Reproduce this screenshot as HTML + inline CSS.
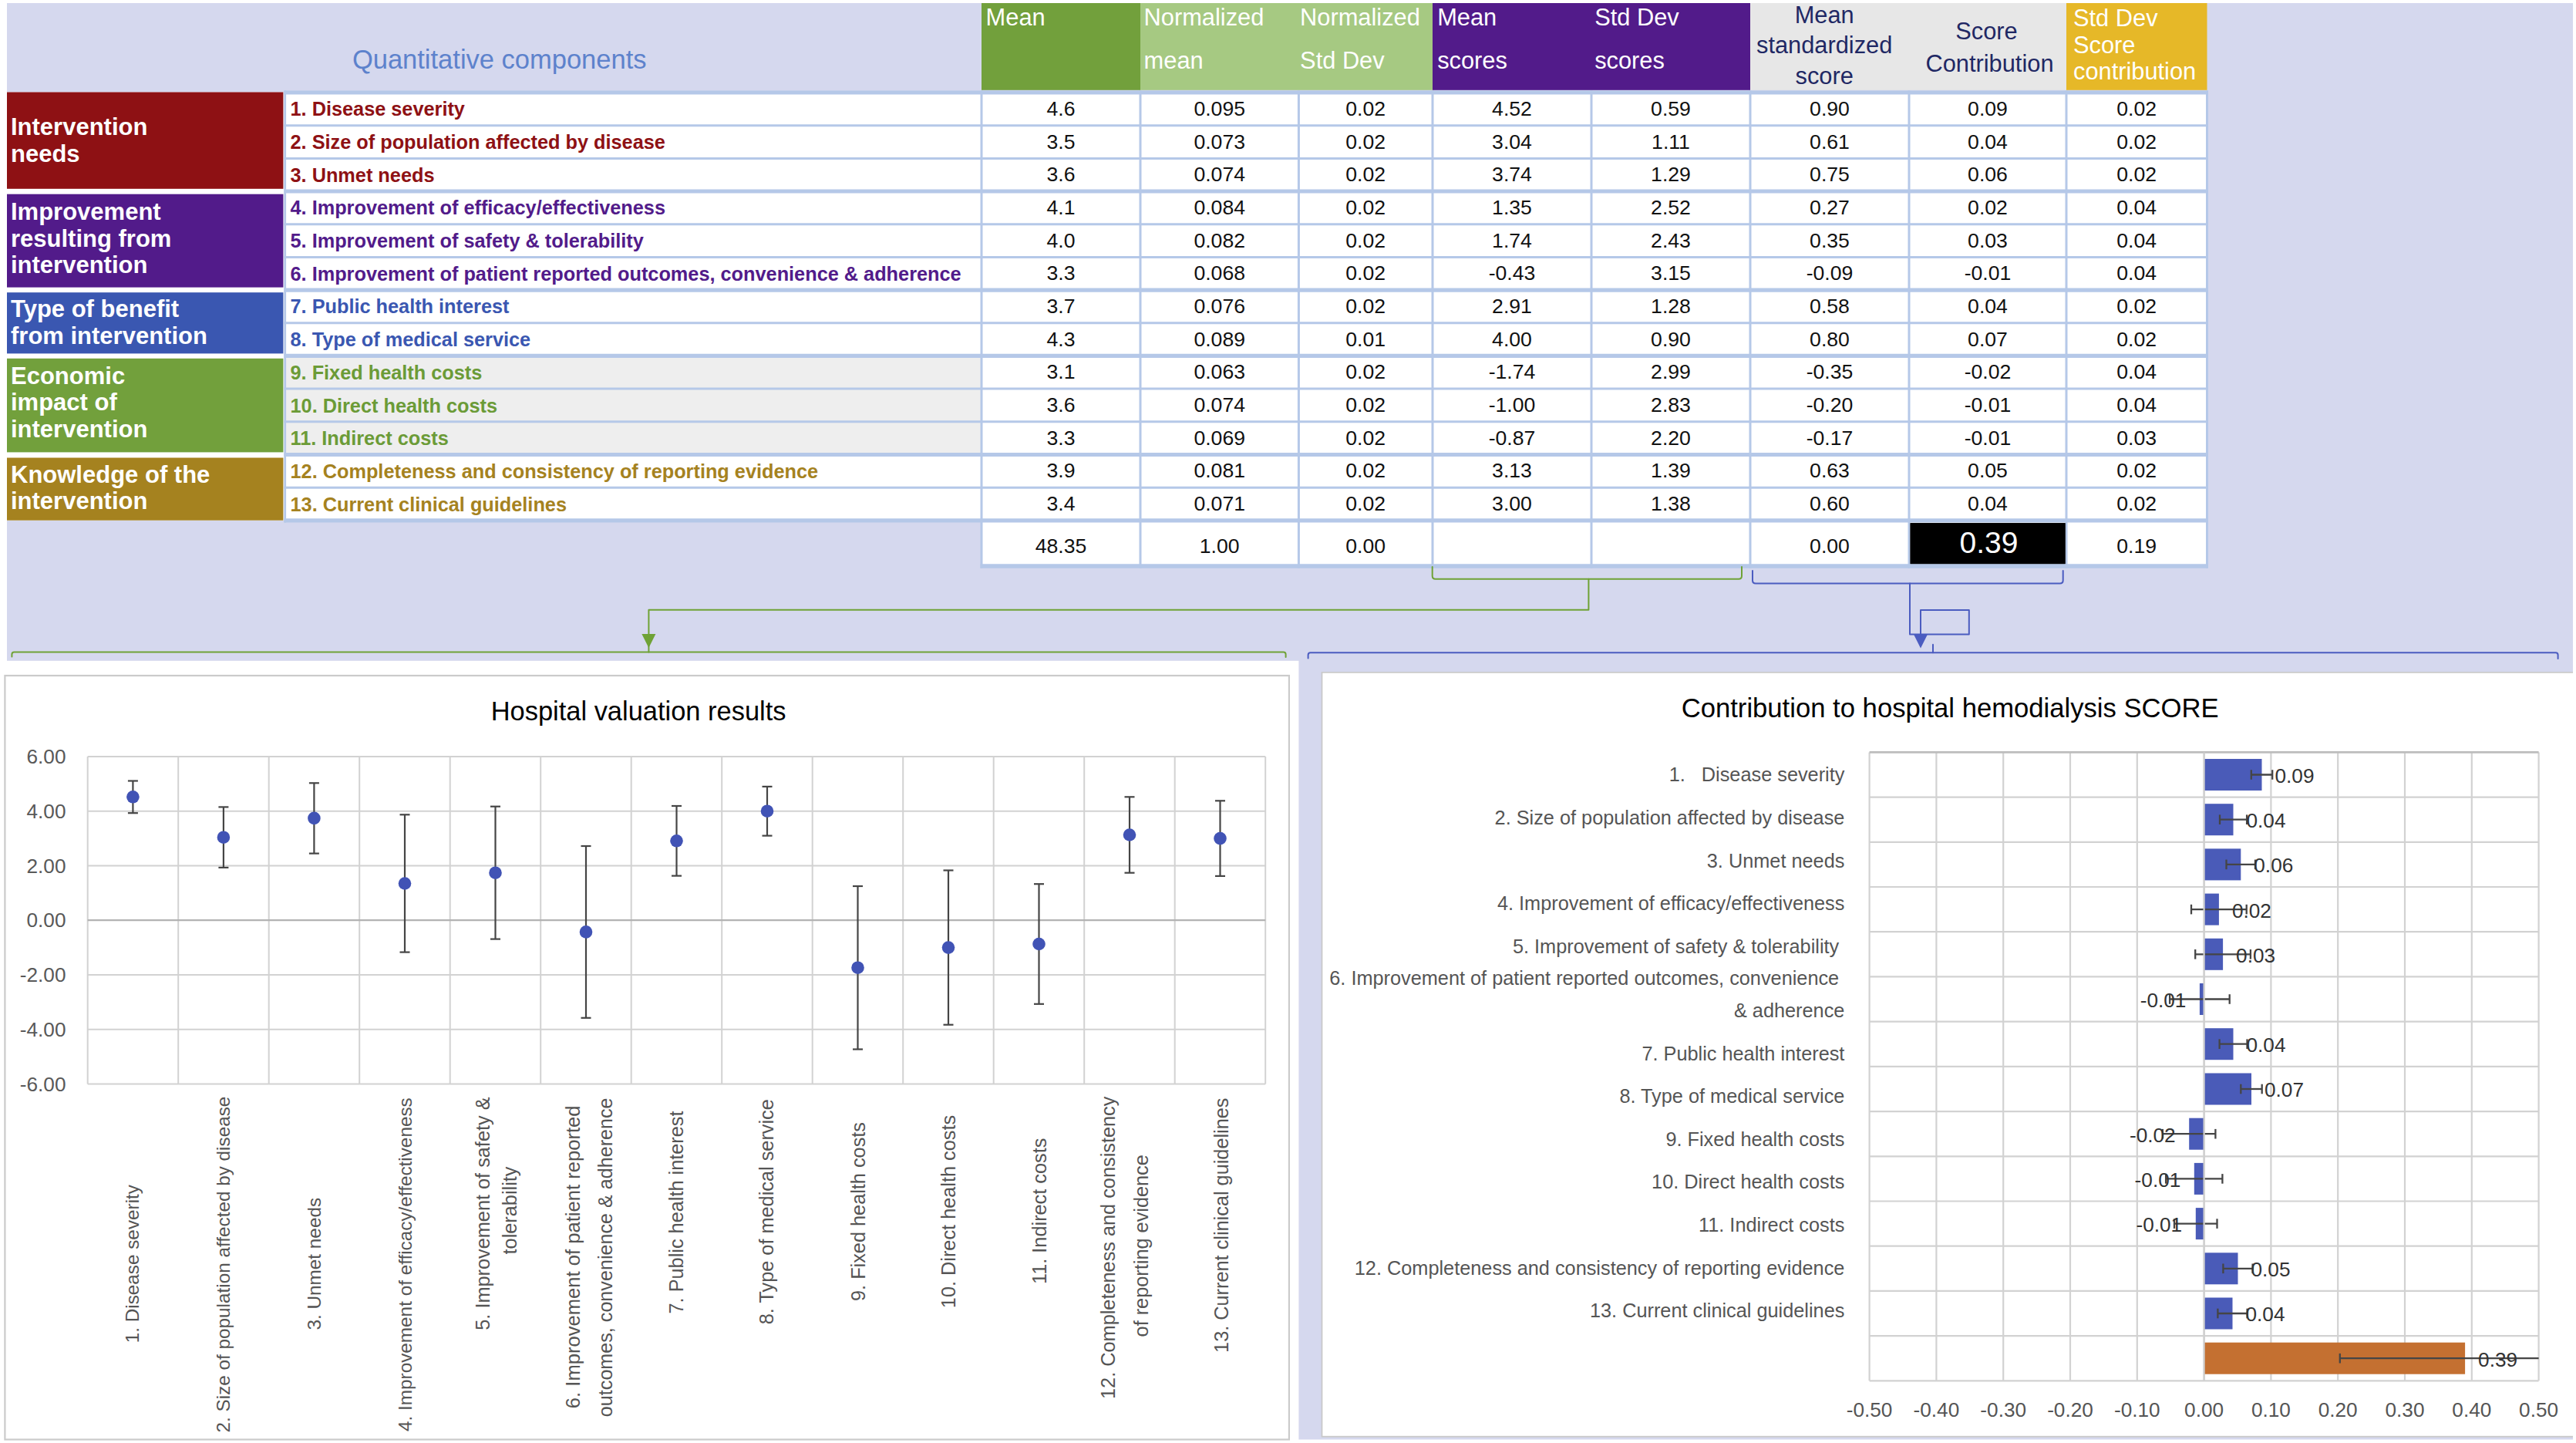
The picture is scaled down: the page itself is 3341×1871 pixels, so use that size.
<!DOCTYPE html>
<html lang="en"><head><meta charset="utf-8"><title>Hospital valuation results</title>
<style>
html,body{margin:0;padding:0;background:#fff;}
body{width:3341px;height:1871px;overflow:hidden;}
svg{display:block;font-family:"Liberation Sans",sans-serif;}
text{white-space:pre;}
</style></head><body>
<svg width="3341" height="1871" viewBox="0 0 3341 1871">
<rect x="9.0" y="4.0" width="3328.0" height="1862.5" fill="#d5d8ee" />
<rect x="0.0" y="856.8" width="1684.4" height="1014.2" fill="#fff" />
<rect x="1713.6" y="871.0" width="1627.4" height="992.6" fill="#c9c9c9" />
<rect x="1715.4" y="872.7" width="1625.6" height="989.1" fill="#fff" />
<rect x="3337.0" y="860.0" width="4.0" height="1011.0" fill="#fff" />
<rect x="3337.0" y="1861.8" width="4.0" height="9.2" fill="#fff" />
<rect x="1273.0" y="4.0" width="206.0" height="112.8" fill="#72a03c" />
<rect x="1479.0" y="4.0" width="379.0" height="112.8" fill="#a6c982" />
<rect x="1858.0" y="4.0" width="412.0" height="112.8" fill="#521b8a" />
<rect x="2270.0" y="4.0" width="410.0" height="112.8" fill="#e7e7e7" />
<rect x="2680.0" y="4.0" width="182.5" height="112.8" fill="#e6b828" />
<text x="1278.6" y="32.8" font-size="30.8" fill="#fff" text-anchor="start" font-weight="normal" >Mean</text>
<text x="1483.6" y="32.8" font-size="30.8" fill="#fff" text-anchor="start" font-weight="normal" >Normalized</text>
<text x="1483.6" y="89.4" font-size="30.8" fill="#fff" text-anchor="start" font-weight="normal" >mean</text>
<text x="1686.1" y="32.8" font-size="30.8" fill="#fff" text-anchor="start" font-weight="normal" >Normalized</text>
<text x="1686.1" y="89.4" font-size="30.8" fill="#fff" text-anchor="start" font-weight="normal" >Std Dev</text>
<text x="1864.2" y="32.8" font-size="30.8" fill="#fff" text-anchor="start" font-weight="normal" >Mean</text>
<text x="1864.2" y="89.4" font-size="30.8" fill="#fff" text-anchor="start" font-weight="normal" >scores</text>
<text x="2068.2" y="32.8" font-size="30.8" fill="#fff" text-anchor="start" font-weight="normal" >Std Dev</text>
<text x="2068.2" y="89.4" font-size="30.8" fill="#fff" text-anchor="start" font-weight="normal" >scores</text>
<text x="2366.2" y="29.8" font-size="30.8" fill="#1f2864" text-anchor="middle" font-weight="normal" >Mean</text>
<text x="2366.2" y="68.8" font-size="30.8" fill="#1f2864" text-anchor="middle" font-weight="normal" >standardized</text>
<text x="2366.2" y="109.3" font-size="30.8" fill="#1f2864" text-anchor="middle" font-weight="normal" >score</text>
<text x="2576.5" y="51.4" font-size="30.8" fill="#1f2864" text-anchor="middle" font-weight="normal" >Score</text>
<text x="2580.5" y="93.2" font-size="30.8" fill="#1f2864" text-anchor="middle" font-weight="normal" >Contribution</text>
<text x="2689.0" y="34.3" font-size="30.8" fill="#fff" text-anchor="start" font-weight="normal" >Std Dev</text>
<text x="2689.0" y="68.8" font-size="30.8" fill="#fff" text-anchor="start" font-weight="normal" >Score</text>
<text x="2689.0" y="103.1" font-size="30.8" fill="#fff" text-anchor="start" font-weight="normal" >contribution</text>
<text x="647.7" y="88.9" font-size="34.5" fill="#5d82cc" text-anchor="middle" font-weight="normal" >Quantitative components</text>
<rect x="9.0" y="119.5" width="360.7" height="555.3" fill="#fff" />
<rect x="369.7" y="118.0" width="903.3" height="556.8" fill="#fff" />
<rect x="369.7" y="461.4" width="903.3" height="128.0" fill="#eeeeee" />
<rect x="1273.0" y="118.0" width="1589.5" height="616.0" fill="#fff" />
<rect x="9.0" y="119.5" width="358.4" height="125.3" fill="#8e1114" />
<text x="14.0" y="175.2" font-size="31" fill="#fff" text-anchor="start" font-weight="bold" >Intervention</text>
<text x="14.0" y="209.6" font-size="31" fill="#fff" text-anchor="start" font-weight="bold" >needs</text>
<rect x="9.0" y="251.7" width="358.4" height="120.9" fill="#521b8a" />
<text x="14.0" y="284.8" font-size="31" fill="#fff" text-anchor="start" font-weight="bold" >Improvement</text>
<text x="14.0" y="319.5" font-size="31" fill="#fff" text-anchor="start" font-weight="bold" >resulting from</text>
<text x="14.0" y="353.8" font-size="31" fill="#fff" text-anchor="start" font-weight="bold" >intervention</text>
<rect x="9.0" y="379.2" width="358.4" height="79.2" fill="#3a57b1" />
<text x="14.0" y="411.0" font-size="31" fill="#fff" text-anchor="start" font-weight="bold" >Type of benefit</text>
<text x="14.0" y="445.9" font-size="31" fill="#fff" text-anchor="start" font-weight="bold" >from intervention</text>
<rect x="9.0" y="464.8" width="358.4" height="121.6" fill="#72a03c" />
<text x="14.0" y="498.1" font-size="31" fill="#fff" text-anchor="start" font-weight="bold" >Economic</text>
<text x="14.0" y="532.4" font-size="31" fill="#fff" text-anchor="start" font-weight="bold" >impact of</text>
<text x="14.0" y="566.7" font-size="31" fill="#fff" text-anchor="start" font-weight="bold" >intervention</text>
<rect x="9.0" y="593.5" width="358.4" height="81.2" fill="#a5821f" />
<text x="14.0" y="625.8" font-size="31" fill="#fff" text-anchor="start" font-weight="bold" >Knowledge of the</text>
<text x="14.0" y="660.1" font-size="31" fill="#fff" text-anchor="start" font-weight="bold" >intervention</text>
<rect x="2477.5" y="678.2" width="202.5" height="53.0" fill="#000" />
<line x1="368.4" y1="120.0" x2="2864.0" y2="120.0" stroke="#b5c8e8" stroke-width="5.2" />
<line x1="368.4" y1="162.7" x2="2864.0" y2="162.7" stroke="#b5c8e8" stroke-width="3" />
<line x1="368.4" y1="205.4" x2="2864.0" y2="205.4" stroke="#b5c8e8" stroke-width="3" />
<line x1="368.4" y1="248.0" x2="2864.0" y2="248.0" stroke="#b5c8e8" stroke-width="5.2" />
<line x1="368.4" y1="290.7" x2="2864.0" y2="290.7" stroke="#b5c8e8" stroke-width="3" />
<line x1="368.4" y1="333.4" x2="2864.0" y2="333.4" stroke="#b5c8e8" stroke-width="3" />
<line x1="368.4" y1="376.1" x2="2864.0" y2="376.1" stroke="#b5c8e8" stroke-width="5.2" />
<line x1="368.4" y1="418.8" x2="2864.0" y2="418.8" stroke="#b5c8e8" stroke-width="3" />
<line x1="368.4" y1="461.4" x2="2864.0" y2="461.4" stroke="#b5c8e8" stroke-width="5.2" />
<line x1="368.4" y1="504.1" x2="2864.0" y2="504.1" stroke="#b5c8e8" stroke-width="3" />
<line x1="368.4" y1="546.8" x2="2864.0" y2="546.8" stroke="#b5c8e8" stroke-width="3" />
<line x1="368.4" y1="589.5" x2="2864.0" y2="589.5" stroke="#b5c8e8" stroke-width="5.2" />
<line x1="368.4" y1="632.2" x2="2864.0" y2="632.2" stroke="#b5c8e8" stroke-width="3" />
<line x1="368.4" y1="674.8" x2="2864.0" y2="674.8" stroke="#b5c8e8" stroke-width="5.2" />
<line x1="1271.5" y1="734.0" x2="2864.0" y2="734.0" stroke="#b5c8e8" stroke-width="5.5" />
<line x1="369.7" y1="117.4" x2="369.7" y2="677.4" stroke="#b5c8e8" stroke-width="2.8" />
<line x1="1273.0" y1="117.4" x2="1273.0" y2="736.7" stroke="#b5c8e8" stroke-width="3" />
<line x1="1479.0" y1="117.4" x2="1479.0" y2="736.7" stroke="#b5c8e8" stroke-width="3" />
<line x1="1684.4" y1="117.4" x2="1684.4" y2="736.7" stroke="#b5c8e8" stroke-width="3" />
<line x1="1858.0" y1="117.4" x2="1858.0" y2="736.7" stroke="#b5c8e8" stroke-width="3" />
<line x1="2064.0" y1="117.4" x2="2064.0" y2="736.7" stroke="#b5c8e8" stroke-width="3" />
<line x1="2270.0" y1="117.4" x2="2270.0" y2="736.7" stroke="#b5c8e8" stroke-width="3" />
<line x1="2476.0" y1="117.4" x2="2476.0" y2="736.7" stroke="#b5c8e8" stroke-width="3" />
<line x1="2680.0" y1="117.4" x2="2680.0" y2="736.7" stroke="#b5c8e8" stroke-width="3" />
<line x1="2862.5" y1="117.4" x2="2862.5" y2="736.7" stroke="#b5c8e8" stroke-width="3" />
<rect x="2477.5" y="678.2" width="201.1" height="53.0" fill="#000" />
<text x="376.5" y="150.3" font-size="25.3" fill="#8e1114" text-anchor="start" font-weight="bold" >1. Disease severity</text>
<text x="376.5" y="193.0" font-size="25.3" fill="#8e1114" text-anchor="start" font-weight="bold" >2. Size of population affected by disease</text>
<text x="376.5" y="235.7" font-size="25.3" fill="#8e1114" text-anchor="start" font-weight="bold" >3. Unmet needs</text>
<text x="376.5" y="278.4" font-size="25.3" fill="#521b8a" text-anchor="start" font-weight="bold" >4. Improvement of efficacy/effectiveness</text>
<text x="376.5" y="321.1" font-size="25.3" fill="#521b8a" text-anchor="start" font-weight="bold" >5. Improvement of safety &amp; tolerability</text>
<text x="376.5" y="363.7" font-size="25.3" fill="#521b8a" text-anchor="start" font-weight="bold" >6. Improvement of patient reported outcomes, convenience &amp; adherence</text>
<text x="376.5" y="406.4" font-size="25.3" fill="#3a57b1" text-anchor="start" font-weight="bold" >7. Public health interest</text>
<text x="376.5" y="449.1" font-size="25.3" fill="#3a57b1" text-anchor="start" font-weight="bold" >8. Type of medical service</text>
<text x="376.5" y="491.8" font-size="25.3" fill="#6b9b37" text-anchor="start" font-weight="bold" >9. Fixed health costs</text>
<text x="376.5" y="534.5" font-size="25.3" fill="#6b9b37" text-anchor="start" font-weight="bold" >10. Direct health costs</text>
<text x="376.5" y="577.1" font-size="25.3" fill="#6b9b37" text-anchor="start" font-weight="bold" >11. Indirect costs</text>
<text x="376.5" y="619.8" font-size="25.3" fill="#a5821f" text-anchor="start" font-weight="bold" >12. Completeness and consistency of reporting evidence</text>
<text x="376.5" y="662.5" font-size="25.3" fill="#a5821f" text-anchor="start" font-weight="bold" >13. Current clinical guidelines</text>
<text x="1376.0" y="149.9" font-size="26.6" fill="#111" text-anchor="middle" font-weight="normal" >4.6</text>
<text x="1581.7" y="149.9" font-size="26.6" fill="#111" text-anchor="middle" font-weight="normal" >0.095</text>
<text x="1771.2" y="149.9" font-size="26.6" fill="#111" text-anchor="middle" font-weight="normal" >0.02</text>
<text x="1961.0" y="149.9" font-size="26.6" fill="#111" text-anchor="middle" font-weight="normal" >4.52</text>
<text x="2167.0" y="149.9" font-size="26.6" fill="#111" text-anchor="middle" font-weight="normal" >0.59</text>
<text x="2373.0" y="149.9" font-size="26.6" fill="#111" text-anchor="middle" font-weight="normal" >0.90</text>
<text x="2578.0" y="149.9" font-size="26.6" fill="#111" text-anchor="middle" font-weight="normal" >0.09</text>
<text x="2771.2" y="149.9" font-size="26.6" fill="#111" text-anchor="middle" font-weight="normal" >0.02</text>
<text x="1376.0" y="192.6" font-size="26.6" fill="#111" text-anchor="middle" font-weight="normal" >3.5</text>
<text x="1581.7" y="192.6" font-size="26.6" fill="#111" text-anchor="middle" font-weight="normal" >0.073</text>
<text x="1771.2" y="192.6" font-size="26.6" fill="#111" text-anchor="middle" font-weight="normal" >0.02</text>
<text x="1961.0" y="192.6" font-size="26.6" fill="#111" text-anchor="middle" font-weight="normal" >3.04</text>
<text x="2167.0" y="192.6" font-size="26.6" fill="#111" text-anchor="middle" font-weight="normal" >1.11</text>
<text x="2373.0" y="192.6" font-size="26.6" fill="#111" text-anchor="middle" font-weight="normal" >0.61</text>
<text x="2578.0" y="192.6" font-size="26.6" fill="#111" text-anchor="middle" font-weight="normal" >0.04</text>
<text x="2771.2" y="192.6" font-size="26.6" fill="#111" text-anchor="middle" font-weight="normal" >0.02</text>
<text x="1376.0" y="235.3" font-size="26.6" fill="#111" text-anchor="middle" font-weight="normal" >3.6</text>
<text x="1581.7" y="235.3" font-size="26.6" fill="#111" text-anchor="middle" font-weight="normal" >0.074</text>
<text x="1771.2" y="235.3" font-size="26.6" fill="#111" text-anchor="middle" font-weight="normal" >0.02</text>
<text x="1961.0" y="235.3" font-size="26.6" fill="#111" text-anchor="middle" font-weight="normal" >3.74</text>
<text x="2167.0" y="235.3" font-size="26.6" fill="#111" text-anchor="middle" font-weight="normal" >1.29</text>
<text x="2373.0" y="235.3" font-size="26.6" fill="#111" text-anchor="middle" font-weight="normal" >0.75</text>
<text x="2578.0" y="235.3" font-size="26.6" fill="#111" text-anchor="middle" font-weight="normal" >0.06</text>
<text x="2771.2" y="235.3" font-size="26.6" fill="#111" text-anchor="middle" font-weight="normal" >0.02</text>
<text x="1376.0" y="278.0" font-size="26.6" fill="#111" text-anchor="middle" font-weight="normal" >4.1</text>
<text x="1581.7" y="278.0" font-size="26.6" fill="#111" text-anchor="middle" font-weight="normal" >0.084</text>
<text x="1771.2" y="278.0" font-size="26.6" fill="#111" text-anchor="middle" font-weight="normal" >0.02</text>
<text x="1961.0" y="278.0" font-size="26.6" fill="#111" text-anchor="middle" font-weight="normal" >1.35</text>
<text x="2167.0" y="278.0" font-size="26.6" fill="#111" text-anchor="middle" font-weight="normal" >2.52</text>
<text x="2373.0" y="278.0" font-size="26.6" fill="#111" text-anchor="middle" font-weight="normal" >0.27</text>
<text x="2578.0" y="278.0" font-size="26.6" fill="#111" text-anchor="middle" font-weight="normal" >0.02</text>
<text x="2771.2" y="278.0" font-size="26.6" fill="#111" text-anchor="middle" font-weight="normal" >0.04</text>
<text x="1376.0" y="320.7" font-size="26.6" fill="#111" text-anchor="middle" font-weight="normal" >4.0</text>
<text x="1581.7" y="320.7" font-size="26.6" fill="#111" text-anchor="middle" font-weight="normal" >0.082</text>
<text x="1771.2" y="320.7" font-size="26.6" fill="#111" text-anchor="middle" font-weight="normal" >0.02</text>
<text x="1961.0" y="320.7" font-size="26.6" fill="#111" text-anchor="middle" font-weight="normal" >1.74</text>
<text x="2167.0" y="320.7" font-size="26.6" fill="#111" text-anchor="middle" font-weight="normal" >2.43</text>
<text x="2373.0" y="320.7" font-size="26.6" fill="#111" text-anchor="middle" font-weight="normal" >0.35</text>
<text x="2578.0" y="320.7" font-size="26.6" fill="#111" text-anchor="middle" font-weight="normal" >0.03</text>
<text x="2771.2" y="320.7" font-size="26.6" fill="#111" text-anchor="middle" font-weight="normal" >0.04</text>
<text x="1376.0" y="363.3" font-size="26.6" fill="#111" text-anchor="middle" font-weight="normal" >3.3</text>
<text x="1581.7" y="363.3" font-size="26.6" fill="#111" text-anchor="middle" font-weight="normal" >0.068</text>
<text x="1771.2" y="363.3" font-size="26.6" fill="#111" text-anchor="middle" font-weight="normal" >0.02</text>
<text x="1961.0" y="363.3" font-size="26.6" fill="#111" text-anchor="middle" font-weight="normal" >-0.43</text>
<text x="2167.0" y="363.3" font-size="26.6" fill="#111" text-anchor="middle" font-weight="normal" >3.15</text>
<text x="2373.0" y="363.3" font-size="26.6" fill="#111" text-anchor="middle" font-weight="normal" >-0.09</text>
<text x="2578.0" y="363.3" font-size="26.6" fill="#111" text-anchor="middle" font-weight="normal" >-0.01</text>
<text x="2771.2" y="363.3" font-size="26.6" fill="#111" text-anchor="middle" font-weight="normal" >0.04</text>
<text x="1376.0" y="406.0" font-size="26.6" fill="#111" text-anchor="middle" font-weight="normal" >3.7</text>
<text x="1581.7" y="406.0" font-size="26.6" fill="#111" text-anchor="middle" font-weight="normal" >0.076</text>
<text x="1771.2" y="406.0" font-size="26.6" fill="#111" text-anchor="middle" font-weight="normal" >0.02</text>
<text x="1961.0" y="406.0" font-size="26.6" fill="#111" text-anchor="middle" font-weight="normal" >2.91</text>
<text x="2167.0" y="406.0" font-size="26.6" fill="#111" text-anchor="middle" font-weight="normal" >1.28</text>
<text x="2373.0" y="406.0" font-size="26.6" fill="#111" text-anchor="middle" font-weight="normal" >0.58</text>
<text x="2578.0" y="406.0" font-size="26.6" fill="#111" text-anchor="middle" font-weight="normal" >0.04</text>
<text x="2771.2" y="406.0" font-size="26.6" fill="#111" text-anchor="middle" font-weight="normal" >0.02</text>
<text x="1376.0" y="448.7" font-size="26.6" fill="#111" text-anchor="middle" font-weight="normal" >4.3</text>
<text x="1581.7" y="448.7" font-size="26.6" fill="#111" text-anchor="middle" font-weight="normal" >0.089</text>
<text x="1771.2" y="448.7" font-size="26.6" fill="#111" text-anchor="middle" font-weight="normal" >0.01</text>
<text x="1961.0" y="448.7" font-size="26.6" fill="#111" text-anchor="middle" font-weight="normal" >4.00</text>
<text x="2167.0" y="448.7" font-size="26.6" fill="#111" text-anchor="middle" font-weight="normal" >0.90</text>
<text x="2373.0" y="448.7" font-size="26.6" fill="#111" text-anchor="middle" font-weight="normal" >0.80</text>
<text x="2578.0" y="448.7" font-size="26.6" fill="#111" text-anchor="middle" font-weight="normal" >0.07</text>
<text x="2771.2" y="448.7" font-size="26.6" fill="#111" text-anchor="middle" font-weight="normal" >0.02</text>
<text x="1376.0" y="491.4" font-size="26.6" fill="#111" text-anchor="middle" font-weight="normal" >3.1</text>
<text x="1581.7" y="491.4" font-size="26.6" fill="#111" text-anchor="middle" font-weight="normal" >0.063</text>
<text x="1771.2" y="491.4" font-size="26.6" fill="#111" text-anchor="middle" font-weight="normal" >0.02</text>
<text x="1961.0" y="491.4" font-size="26.6" fill="#111" text-anchor="middle" font-weight="normal" >-1.74</text>
<text x="2167.0" y="491.4" font-size="26.6" fill="#111" text-anchor="middle" font-weight="normal" >2.99</text>
<text x="2373.0" y="491.4" font-size="26.6" fill="#111" text-anchor="middle" font-weight="normal" >-0.35</text>
<text x="2578.0" y="491.4" font-size="26.6" fill="#111" text-anchor="middle" font-weight="normal" >-0.02</text>
<text x="2771.2" y="491.4" font-size="26.6" fill="#111" text-anchor="middle" font-weight="normal" >0.04</text>
<text x="1376.0" y="534.1" font-size="26.6" fill="#111" text-anchor="middle" font-weight="normal" >3.6</text>
<text x="1581.7" y="534.1" font-size="26.6" fill="#111" text-anchor="middle" font-weight="normal" >0.074</text>
<text x="1771.2" y="534.1" font-size="26.6" fill="#111" text-anchor="middle" font-weight="normal" >0.02</text>
<text x="1961.0" y="534.1" font-size="26.6" fill="#111" text-anchor="middle" font-weight="normal" >-1.00</text>
<text x="2167.0" y="534.1" font-size="26.6" fill="#111" text-anchor="middle" font-weight="normal" >2.83</text>
<text x="2373.0" y="534.1" font-size="26.6" fill="#111" text-anchor="middle" font-weight="normal" >-0.20</text>
<text x="2578.0" y="534.1" font-size="26.6" fill="#111" text-anchor="middle" font-weight="normal" >-0.01</text>
<text x="2771.2" y="534.1" font-size="26.6" fill="#111" text-anchor="middle" font-weight="normal" >0.04</text>
<text x="1376.0" y="576.7" font-size="26.6" fill="#111" text-anchor="middle" font-weight="normal" >3.3</text>
<text x="1581.7" y="576.7" font-size="26.6" fill="#111" text-anchor="middle" font-weight="normal" >0.069</text>
<text x="1771.2" y="576.7" font-size="26.6" fill="#111" text-anchor="middle" font-weight="normal" >0.02</text>
<text x="1961.0" y="576.7" font-size="26.6" fill="#111" text-anchor="middle" font-weight="normal" >-0.87</text>
<text x="2167.0" y="576.7" font-size="26.6" fill="#111" text-anchor="middle" font-weight="normal" >2.20</text>
<text x="2373.0" y="576.7" font-size="26.6" fill="#111" text-anchor="middle" font-weight="normal" >-0.17</text>
<text x="2578.0" y="576.7" font-size="26.6" fill="#111" text-anchor="middle" font-weight="normal" >-0.01</text>
<text x="2771.2" y="576.7" font-size="26.6" fill="#111" text-anchor="middle" font-weight="normal" >0.03</text>
<text x="1376.0" y="619.4" font-size="26.6" fill="#111" text-anchor="middle" font-weight="normal" >3.9</text>
<text x="1581.7" y="619.4" font-size="26.6" fill="#111" text-anchor="middle" font-weight="normal" >0.081</text>
<text x="1771.2" y="619.4" font-size="26.6" fill="#111" text-anchor="middle" font-weight="normal" >0.02</text>
<text x="1961.0" y="619.4" font-size="26.6" fill="#111" text-anchor="middle" font-weight="normal" >3.13</text>
<text x="2167.0" y="619.4" font-size="26.6" fill="#111" text-anchor="middle" font-weight="normal" >1.39</text>
<text x="2373.0" y="619.4" font-size="26.6" fill="#111" text-anchor="middle" font-weight="normal" >0.63</text>
<text x="2578.0" y="619.4" font-size="26.6" fill="#111" text-anchor="middle" font-weight="normal" >0.05</text>
<text x="2771.2" y="619.4" font-size="26.6" fill="#111" text-anchor="middle" font-weight="normal" >0.02</text>
<text x="1376.0" y="662.1" font-size="26.6" fill="#111" text-anchor="middle" font-weight="normal" >3.4</text>
<text x="1581.7" y="662.1" font-size="26.6" fill="#111" text-anchor="middle" font-weight="normal" >0.071</text>
<text x="1771.2" y="662.1" font-size="26.6" fill="#111" text-anchor="middle" font-weight="normal" >0.02</text>
<text x="1961.0" y="662.1" font-size="26.6" fill="#111" text-anchor="middle" font-weight="normal" >3.00</text>
<text x="2167.0" y="662.1" font-size="26.6" fill="#111" text-anchor="middle" font-weight="normal" >1.38</text>
<text x="2373.0" y="662.1" font-size="26.6" fill="#111" text-anchor="middle" font-weight="normal" >0.60</text>
<text x="2578.0" y="662.1" font-size="26.6" fill="#111" text-anchor="middle" font-weight="normal" >0.04</text>
<text x="2771.2" y="662.1" font-size="26.6" fill="#111" text-anchor="middle" font-weight="normal" >0.02</text>
<text x="1376.0" y="717.2" font-size="26.6" fill="#111" text-anchor="middle" font-weight="normal" >48.35</text>
<text x="1581.7" y="717.2" font-size="26.6" fill="#111" text-anchor="middle" font-weight="normal" >1.00</text>
<text x="1771.2" y="717.2" font-size="26.6" fill="#111" text-anchor="middle" font-weight="normal" >0.00</text>
<text x="2373.0" y="717.2" font-size="26.6" fill="#111" text-anchor="middle" font-weight="normal" >0.00</text>
<text x="2771.2" y="717.2" font-size="26.6" fill="#111" text-anchor="middle" font-weight="normal" >0.19</text>
<text x="2579.5" y="716.9" font-size="39" fill="#fff" text-anchor="middle" font-weight="normal" >0.39</text>
<path d="M1857.7,735 V746.8 Q1857.7,750.8 1861.7,750.8 H2255 Q2259,750.8 2259,746.8 V735" stroke="#6fa236" stroke-width="2.0" fill="none" stroke-linecap="round" stroke-linejoin="round" />
<path d="M2060.4,750.8 V790.7 H841.4 V845.5" stroke="#6fa236" stroke-width="2.0" fill="none" stroke-linecap="round" stroke-linejoin="round" />
<polygon points="832.4,822 850.4,822 841.4,840" fill="#6fa236"/>
<path d="M15.4,851.5 V848.5 Q15.4,845.5 18.4,845.5 H1664.6 Q1667.6,845.5 1667.6,848.5 V852" stroke="#6fa236" stroke-width="2.0" fill="none" stroke-linecap="round" stroke-linejoin="round" />
<path d="M2273,740 V752.4 Q2273,756.4 2277,756.4 H2671.7 Q2675.7,756.4 2675.7,752.4 V740" stroke="#4b5cc0" stroke-width="2.0" fill="none" stroke-linecap="round" stroke-linejoin="round" />
<path d="M2477,756.4 V822.4 H2553.8 V791 H2491 V822.4" stroke="#4b5cc0" stroke-width="2.0" fill="none" stroke-linecap="round" stroke-linejoin="round" />
<polygon points="2482,822.4 2500,822.4 2491,840.5" fill="#4b5cc0"/>
<path d="M2507,835.7 V846.3" stroke="#4b5cc0" stroke-width="2.0" fill="none" stroke-linecap="round" stroke-linejoin="round" />
<path d="M1696.6,853.5 V849.3 Q1696.6,846.3 1699.6,846.3 H3314.6 Q3317.6,846.3 3317.6,849.3 V854" stroke="#4b5cc0" stroke-width="2.0" fill="none" stroke-linecap="round" stroke-linejoin="round" />
<rect x="6.4" y="876" width="1665.5" height="990.5" fill="#fff" stroke="#cbcbcb" stroke-width="2.2"/>
<text x="828.1" y="933.6" font-size="34.45" fill="#000" text-anchor="middle" font-weight="normal" >Hospital valuation results</text>
<line x1="113.7" y1="981.0" x2="113.7" y2="1405.4" stroke="#d2d2d2" stroke-width="2" />
<line x1="231.2" y1="981.0" x2="231.2" y2="1405.4" stroke="#d2d2d2" stroke-width="2" />
<line x1="348.7" y1="981.0" x2="348.7" y2="1405.4" stroke="#d2d2d2" stroke-width="2" />
<line x1="466.2" y1="981.0" x2="466.2" y2="1405.4" stroke="#d2d2d2" stroke-width="2" />
<line x1="583.7" y1="981.0" x2="583.7" y2="1405.4" stroke="#d2d2d2" stroke-width="2" />
<line x1="701.2" y1="981.0" x2="701.2" y2="1405.4" stroke="#d2d2d2" stroke-width="2" />
<line x1="818.7" y1="981.0" x2="818.7" y2="1405.4" stroke="#d2d2d2" stroke-width="2" />
<line x1="936.2" y1="981.0" x2="936.2" y2="1405.4" stroke="#d2d2d2" stroke-width="2" />
<line x1="1053.7" y1="981.0" x2="1053.7" y2="1405.4" stroke="#d2d2d2" stroke-width="2" />
<line x1="1171.2" y1="981.0" x2="1171.2" y2="1405.4" stroke="#d2d2d2" stroke-width="2" />
<line x1="1288.7" y1="981.0" x2="1288.7" y2="1405.4" stroke="#d2d2d2" stroke-width="2" />
<line x1="1406.2" y1="981.0" x2="1406.2" y2="1405.4" stroke="#d2d2d2" stroke-width="2" />
<line x1="1523.7" y1="981.0" x2="1523.7" y2="1405.4" stroke="#d2d2d2" stroke-width="2" />
<line x1="1641.2" y1="981.0" x2="1641.2" y2="1405.4" stroke="#d2d2d2" stroke-width="2" />
<line x1="113.7" y1="981.0" x2="1641.2" y2="981.0" stroke="#d2d2d2" stroke-width="2" />
<text x="85.5" y="990.2" font-size="26.2" fill="#595959" text-anchor="end" font-weight="normal" >6.00</text>
<line x1="113.7" y1="1051.7" x2="1641.2" y2="1051.7" stroke="#d2d2d2" stroke-width="2" />
<text x="85.5" y="1060.9" font-size="26.2" fill="#595959" text-anchor="end" font-weight="normal" >4.00</text>
<line x1="113.7" y1="1122.5" x2="1641.2" y2="1122.5" stroke="#d2d2d2" stroke-width="2" />
<text x="85.5" y="1131.7" font-size="26.2" fill="#595959" text-anchor="end" font-weight="normal" >2.00</text>
<line x1="113.7" y1="1193.2" x2="1641.2" y2="1193.2" stroke="#b3b3b3" stroke-width="2.2" />
<text x="85.5" y="1202.4" font-size="26.2" fill="#595959" text-anchor="end" font-weight="normal" >0.00</text>
<line x1="113.7" y1="1263.9" x2="1641.2" y2="1263.9" stroke="#d2d2d2" stroke-width="2" />
<text x="85.5" y="1273.1" font-size="26.2" fill="#595959" text-anchor="end" font-weight="normal" >-2.00</text>
<line x1="113.7" y1="1334.7" x2="1641.2" y2="1334.7" stroke="#d2d2d2" stroke-width="2" />
<text x="85.5" y="1343.9" font-size="26.2" fill="#595959" text-anchor="end" font-weight="normal" >-4.00</text>
<line x1="113.7" y1="1405.4" x2="1641.2" y2="1405.4" stroke="#d2d2d2" stroke-width="2" />
<text x="85.5" y="1414.6" font-size="26.2" fill="#595959" text-anchor="end" font-weight="normal" >-6.00</text>
<line x1="172.4" y1="1012.5" x2="172.4" y2="1054.2" stroke="#454545" stroke-width="2.2" />
<line x1="165.9" y1="1012.5" x2="178.9" y2="1012.5" stroke="#454545" stroke-width="2.2" />
<line x1="165.9" y1="1054.2" x2="178.9" y2="1054.2" stroke="#454545" stroke-width="2.2" />
<circle cx="172.4" cy="1033.3" r="8.3" fill="#4153b5"/>
<line x1="289.9" y1="1046.4" x2="289.9" y2="1124.9" stroke="#454545" stroke-width="2.2" />
<line x1="283.4" y1="1046.4" x2="296.4" y2="1046.4" stroke="#454545" stroke-width="2.2" />
<line x1="283.4" y1="1124.9" x2="296.4" y2="1124.9" stroke="#454545" stroke-width="2.2" />
<circle cx="289.9" cy="1085.7" r="8.3" fill="#4153b5"/>
<line x1="407.4" y1="1015.3" x2="407.4" y2="1106.6" stroke="#454545" stroke-width="2.2" />
<line x1="400.9" y1="1015.3" x2="413.9" y2="1015.3" stroke="#454545" stroke-width="2.2" />
<line x1="400.9" y1="1106.6" x2="413.9" y2="1106.6" stroke="#454545" stroke-width="2.2" />
<circle cx="407.4" cy="1060.9" r="8.3" fill="#4153b5"/>
<line x1="525.0" y1="1056.3" x2="525.0" y2="1234.6" stroke="#454545" stroke-width="2.2" />
<line x1="518.5" y1="1056.3" x2="531.5" y2="1056.3" stroke="#454545" stroke-width="2.2" />
<line x1="518.5" y1="1234.6" x2="531.5" y2="1234.6" stroke="#454545" stroke-width="2.2" />
<circle cx="525.0" cy="1145.5" r="8.3" fill="#4153b5"/>
<line x1="642.5" y1="1045.7" x2="642.5" y2="1217.6" stroke="#454545" stroke-width="2.2" />
<line x1="636.0" y1="1045.7" x2="649.0" y2="1045.7" stroke="#454545" stroke-width="2.2" />
<line x1="636.0" y1="1217.6" x2="649.0" y2="1217.6" stroke="#454545" stroke-width="2.2" />
<circle cx="642.5" cy="1131.7" r="8.3" fill="#4153b5"/>
<line x1="760.0" y1="1097.0" x2="760.0" y2="1319.8" stroke="#454545" stroke-width="2.2" />
<line x1="753.5" y1="1097.0" x2="766.5" y2="1097.0" stroke="#454545" stroke-width="2.2" />
<line x1="753.5" y1="1319.8" x2="766.5" y2="1319.8" stroke="#454545" stroke-width="2.2" />
<circle cx="760.0" cy="1208.4" r="8.3" fill="#4153b5"/>
<line x1="877.5" y1="1045.0" x2="877.5" y2="1135.6" stroke="#454545" stroke-width="2.2" />
<line x1="871.0" y1="1045.0" x2="884.0" y2="1045.0" stroke="#454545" stroke-width="2.2" />
<line x1="871.0" y1="1135.6" x2="884.0" y2="1135.6" stroke="#454545" stroke-width="2.2" />
<circle cx="877.5" cy="1090.3" r="8.3" fill="#4153b5"/>
<line x1="995.0" y1="1019.9" x2="995.0" y2="1083.6" stroke="#454545" stroke-width="2.2" />
<line x1="988.5" y1="1019.9" x2="1001.5" y2="1019.9" stroke="#454545" stroke-width="2.2" />
<line x1="988.5" y1="1083.6" x2="1001.5" y2="1083.6" stroke="#454545" stroke-width="2.2" />
<circle cx="995.0" cy="1051.7" r="8.3" fill="#4153b5"/>
<line x1="1112.5" y1="1149.0" x2="1112.5" y2="1360.5" stroke="#454545" stroke-width="2.2" />
<line x1="1106.0" y1="1149.0" x2="1119.0" y2="1149.0" stroke="#454545" stroke-width="2.2" />
<line x1="1106.0" y1="1360.5" x2="1119.0" y2="1360.5" stroke="#454545" stroke-width="2.2" />
<circle cx="1112.5" cy="1254.7" r="8.3" fill="#4153b5"/>
<line x1="1230.0" y1="1128.5" x2="1230.0" y2="1328.7" stroke="#454545" stroke-width="2.2" />
<line x1="1223.5" y1="1128.5" x2="1236.5" y2="1128.5" stroke="#454545" stroke-width="2.2" />
<line x1="1223.5" y1="1328.7" x2="1236.5" y2="1328.7" stroke="#454545" stroke-width="2.2" />
<circle cx="1230.0" cy="1228.6" r="8.3" fill="#4153b5"/>
<line x1="1347.5" y1="1146.2" x2="1347.5" y2="1301.8" stroke="#454545" stroke-width="2.2" />
<line x1="1341.0" y1="1146.2" x2="1354.0" y2="1146.2" stroke="#454545" stroke-width="2.2" />
<line x1="1341.0" y1="1301.8" x2="1354.0" y2="1301.8" stroke="#454545" stroke-width="2.2" />
<circle cx="1347.5" cy="1224.0" r="8.3" fill="#4153b5"/>
<line x1="1465.0" y1="1033.3" x2="1465.0" y2="1131.7" stroke="#454545" stroke-width="2.2" />
<line x1="1458.5" y1="1033.3" x2="1471.5" y2="1033.3" stroke="#454545" stroke-width="2.2" />
<line x1="1458.5" y1="1131.7" x2="1471.5" y2="1131.7" stroke="#454545" stroke-width="2.2" />
<circle cx="1465.0" cy="1082.5" r="8.3" fill="#4153b5"/>
<line x1="1582.5" y1="1038.3" x2="1582.5" y2="1135.9" stroke="#454545" stroke-width="2.2" />
<line x1="1576.0" y1="1038.3" x2="1589.0" y2="1038.3" stroke="#454545" stroke-width="2.2" />
<line x1="1576.0" y1="1135.9" x2="1589.0" y2="1135.9" stroke="#454545" stroke-width="2.2" />
<circle cx="1582.5" cy="1087.1" r="8.3" fill="#4153b5"/>
<text transform="translate(180.3,1638.7) rotate(-90)" font-size="24.3" fill="#555" text-anchor="middle">1. Disease severity</text>
<text transform="translate(298.2,1639.6) rotate(-90)" font-size="24.3" fill="#555" text-anchor="middle">2. Size of population affected by disease</text>
<text transform="translate(415.7,1638.7) rotate(-90)" font-size="24.3" fill="#555" text-anchor="middle">3. Unmet needs</text>
<text transform="translate(533.6,1639.6) rotate(-90)" font-size="24.3" fill="#555" text-anchor="middle">4. Improvement of efficacy/effectiveness</text>
<text transform="translate(635.4,1573.6) rotate(-90)" font-size="25.3" fill="#555" text-anchor="middle">5. Improvement of safety &amp;</text>
<text transform="translate(670.0,1569.5) rotate(-90)" font-size="25.3" fill="#555" text-anchor="middle">tolerability</text>
<text transform="translate(751.9,1629.8) rotate(-90)" font-size="25.6" fill="#555" text-anchor="middle">6. Improvement of patient reported</text>
<text transform="translate(793.8,1630.3) rotate(-90)" font-size="25.15" fill="#555" text-anchor="middle">outcomes, convenience &amp; adherence</text>
<text transform="translate(885.8,1572.0) rotate(-90)" font-size="25.3" fill="#555" text-anchor="middle">7. Public health interest</text>
<text transform="translate(1003.0,1571.2) rotate(-90)" font-size="25.3" fill="#555" text-anchor="middle">8. Type of medical service</text>
<text transform="translate(1121.5,1571.0) rotate(-90)" font-size="25.3" fill="#555" text-anchor="middle">9. Fixed health costs</text>
<text transform="translate(1239.0,1571.0) rotate(-90)" font-size="25.3" fill="#555" text-anchor="middle">10. Direct health costs</text>
<text transform="translate(1356.9,1570.3) rotate(-90)" font-size="25.3" fill="#555" text-anchor="middle">11. Indirect costs</text>
<text transform="translate(1446.0,1617.8) rotate(-90)" font-size="25.3" fill="#555" text-anchor="middle">12. Completeness and consistency</text>
<text transform="translate(1488.8,1615.3) rotate(-90)" font-size="25.3" fill="#555" text-anchor="middle">of reporting evidence</text>
<text transform="translate(1593.0,1588.7) rotate(-90)" font-size="25.3" fill="#555" text-anchor="middle">13. Current clinical guidelines</text>
<text x="2529.2" y="929.6" font-size="34.65" fill="#000" text-anchor="middle" font-weight="normal" >Contribution to hospital hemodialysis SCORE</text>
<line x1="2424.6" y1="975.4" x2="2424.6" y2="1790.3" stroke="#d2d2d2" stroke-width="2.2" />
<text x="2424.6" y="1836.9" font-size="26.2" fill="#555" text-anchor="middle" font-weight="normal" >-0.50</text>
<line x1="2511.4" y1="975.4" x2="2511.4" y2="1790.3" stroke="#d2d2d2" stroke-width="2.2" />
<text x="2511.4" y="1836.9" font-size="26.2" fill="#555" text-anchor="middle" font-weight="normal" >-0.40</text>
<line x1="2598.2" y1="975.4" x2="2598.2" y2="1790.3" stroke="#d2d2d2" stroke-width="2.2" />
<text x="2598.2" y="1836.9" font-size="26.2" fill="#555" text-anchor="middle" font-weight="normal" >-0.30</text>
<line x1="2685.0" y1="975.4" x2="2685.0" y2="1790.3" stroke="#d2d2d2" stroke-width="2.2" />
<text x="2685.0" y="1836.9" font-size="26.2" fill="#555" text-anchor="middle" font-weight="normal" >-0.20</text>
<line x1="2771.8" y1="975.4" x2="2771.8" y2="1790.3" stroke="#d2d2d2" stroke-width="2.2" />
<text x="2771.8" y="1836.9" font-size="26.2" fill="#555" text-anchor="middle" font-weight="normal" >-0.10</text>
<line x1="2858.6" y1="975.4" x2="2858.6" y2="1790.3" stroke="#d2d2d2" stroke-width="2.2" />
<text x="2858.6" y="1836.9" font-size="26.2" fill="#555" text-anchor="middle" font-weight="normal" >0.00</text>
<line x1="2945.4" y1="975.4" x2="2945.4" y2="1790.3" stroke="#d2d2d2" stroke-width="2.2" />
<text x="2945.4" y="1836.9" font-size="26.2" fill="#555" text-anchor="middle" font-weight="normal" >0.10</text>
<line x1="3032.2" y1="975.4" x2="3032.2" y2="1790.3" stroke="#d2d2d2" stroke-width="2.2" />
<text x="3032.2" y="1836.9" font-size="26.2" fill="#555" text-anchor="middle" font-weight="normal" >0.20</text>
<line x1="3119.0" y1="975.4" x2="3119.0" y2="1790.3" stroke="#d2d2d2" stroke-width="2.2" />
<text x="3119.0" y="1836.9" font-size="26.2" fill="#555" text-anchor="middle" font-weight="normal" >0.30</text>
<line x1="3205.8" y1="975.4" x2="3205.8" y2="1790.3" stroke="#d2d2d2" stroke-width="2.2" />
<text x="3205.8" y="1836.9" font-size="26.2" fill="#555" text-anchor="middle" font-weight="normal" >0.40</text>
<line x1="3292.6" y1="975.4" x2="3292.6" y2="1790.3" stroke="#d2d2d2" stroke-width="2.2" />
<text x="3292.6" y="1836.9" font-size="26.2" fill="#555" text-anchor="middle" font-weight="normal" >0.50</text>
<line x1="2424.6" y1="975.4" x2="3292.6" y2="975.4" stroke="#bdbdbd" stroke-width="2.6" />
<line x1="2424.6" y1="1033.6" x2="3292.6" y2="1033.6" stroke="#d2d2d2" stroke-width="2.2" />
<line x1="2424.6" y1="1091.8" x2="3292.6" y2="1091.8" stroke="#d2d2d2" stroke-width="2.2" />
<line x1="2424.6" y1="1150.0" x2="3292.6" y2="1150.0" stroke="#d2d2d2" stroke-width="2.2" />
<line x1="2424.6" y1="1208.2" x2="3292.6" y2="1208.2" stroke="#d2d2d2" stroke-width="2.2" />
<line x1="2424.6" y1="1266.4" x2="3292.6" y2="1266.4" stroke="#d2d2d2" stroke-width="2.2" />
<line x1="2424.6" y1="1324.6" x2="3292.6" y2="1324.6" stroke="#d2d2d2" stroke-width="2.2" />
<line x1="2424.6" y1="1382.8" x2="3292.6" y2="1382.8" stroke="#d2d2d2" stroke-width="2.2" />
<line x1="2424.6" y1="1441.1" x2="3292.6" y2="1441.1" stroke="#d2d2d2" stroke-width="2.2" />
<line x1="2424.6" y1="1499.3" x2="3292.6" y2="1499.3" stroke="#d2d2d2" stroke-width="2.2" />
<line x1="2424.6" y1="1557.5" x2="3292.6" y2="1557.5" stroke="#d2d2d2" stroke-width="2.2" />
<line x1="2424.6" y1="1615.7" x2="3292.6" y2="1615.7" stroke="#d2d2d2" stroke-width="2.2" />
<line x1="2424.6" y1="1673.9" x2="3292.6" y2="1673.9" stroke="#d2d2d2" stroke-width="2.2" />
<line x1="2424.6" y1="1732.1" x2="3292.6" y2="1732.1" stroke="#d2d2d2" stroke-width="2.2" />
<line x1="2424.6" y1="1790.3" x2="3292.6" y2="1790.3" stroke="#d2d2d2" stroke-width="2.2" />
<clipPath id="pc"><rect x="2424.6" y="975.4" width="868.0" height="814.9"/></clipPath>
<rect x="2858.6" y="984.0" width="74.9" height="41.0" fill="#4a5bb8" />
<g clip-path="url(#pc)">
<line x1="2919.8" y1="1004.5" x2="2947.2" y2="1004.5" stroke="#454545" stroke-width="2.3" />
<line x1="2919.8" y1="998.2" x2="2919.8" y2="1010.8" stroke="#454545" stroke-width="2.3" />
<line x1="2947.2" y1="998.2" x2="2947.2" y2="1010.8" stroke="#454545" stroke-width="2.3" />
</g>
<text x="2950.5" y="1014.9" font-size="26.2" fill="#333" text-anchor="start" font-weight="normal" >0.09</text>
<rect x="2858.6" y="1042.2" width="37.9" height="41.0" fill="#4a5bb8" />
<g clip-path="url(#pc)">
<line x1="2879.0" y1="1062.7" x2="2914.1" y2="1062.7" stroke="#454545" stroke-width="2.3" />
<line x1="2879.0" y1="1056.4" x2="2879.0" y2="1069.0" stroke="#454545" stroke-width="2.3" />
<line x1="2914.1" y1="1056.4" x2="2914.1" y2="1069.0" stroke="#454545" stroke-width="2.3" />
</g>
<text x="2913.5" y="1073.1" font-size="26.2" fill="#333" text-anchor="start" font-weight="normal" >0.04</text>
<rect x="2858.6" y="1100.4" width="47.7" height="41.0" fill="#4a5bb8" />
<g clip-path="url(#pc)">
<line x1="2887.5" y1="1120.9" x2="2925.0" y2="1120.9" stroke="#454545" stroke-width="2.3" />
<line x1="2887.5" y1="1114.6" x2="2887.5" y2="1127.2" stroke="#454545" stroke-width="2.3" />
<line x1="2925.0" y1="1114.6" x2="2925.0" y2="1127.2" stroke="#454545" stroke-width="2.3" />
</g>
<text x="2923.3" y="1131.3" font-size="26.2" fill="#333" text-anchor="start" font-weight="normal" >0.06</text>
<rect x="2858.6" y="1158.6" width="19.3" height="41.0" fill="#4a5bb8" />
<g clip-path="url(#pc)">
<line x1="2842.0" y1="1179.1" x2="2913.7" y2="1179.1" stroke="#454545" stroke-width="2.3" />
<line x1="2842.0" y1="1172.8" x2="2842.0" y2="1185.4" stroke="#454545" stroke-width="2.3" />
<line x1="2913.7" y1="1172.8" x2="2913.7" y2="1185.4" stroke="#454545" stroke-width="2.3" />
</g>
<text x="2894.9" y="1189.5" font-size="26.2" fill="#333" text-anchor="start" font-weight="normal" >0.02</text>
<rect x="2858.6" y="1216.8" width="24.5" height="41.0" fill="#4a5bb8" />
<g clip-path="url(#pc)">
<line x1="2847.2" y1="1237.3" x2="2918.9" y2="1237.3" stroke="#454545" stroke-width="2.3" />
<line x1="2847.2" y1="1231.0" x2="2847.2" y2="1243.6" stroke="#454545" stroke-width="2.3" />
<line x1="2918.9" y1="1231.0" x2="2918.9" y2="1243.6" stroke="#454545" stroke-width="2.3" />
</g>
<text x="2900.1" y="1247.7" font-size="26.2" fill="#333" text-anchor="start" font-weight="normal" >0.03</text>
<rect x="2852.9" y="1275.0" width="5.7" height="41.0" fill="#4a5bb8" />
<g clip-path="url(#pc)">
<line x1="2814.1" y1="1295.5" x2="2891.7" y2="1295.5" stroke="#454545" stroke-width="2.3" />
<line x1="2814.1" y1="1289.2" x2="2814.1" y2="1301.8" stroke="#454545" stroke-width="2.3" />
<line x1="2891.7" y1="1289.2" x2="2891.7" y2="1301.8" stroke="#454545" stroke-width="2.3" />
</g>
<text x="2835.4" y="1305.9" font-size="26.2" fill="#333" text-anchor="end" font-weight="normal" >-0.01</text>
<rect x="2858.6" y="1333.2" width="37.9" height="41.0" fill="#4a5bb8" />
<g clip-path="url(#pc)">
<line x1="2878.6" y1="1353.7" x2="2914.5" y2="1353.7" stroke="#454545" stroke-width="2.3" />
<line x1="2878.6" y1="1347.4" x2="2878.6" y2="1360.0" stroke="#454545" stroke-width="2.3" />
<line x1="2914.5" y1="1347.4" x2="2914.5" y2="1360.0" stroke="#454545" stroke-width="2.3" />
</g>
<text x="2913.5" y="1364.1" font-size="26.2" fill="#333" text-anchor="start" font-weight="normal" >0.04</text>
<rect x="2858.6" y="1391.5" width="61.4" height="41.0" fill="#4a5bb8" />
<g clip-path="url(#pc)">
<line x1="2906.3" y1="1412.0" x2="2933.7" y2="1412.0" stroke="#454545" stroke-width="2.3" />
<line x1="2906.3" y1="1405.7" x2="2906.3" y2="1418.3" stroke="#454545" stroke-width="2.3" />
<line x1="2933.7" y1="1405.7" x2="2933.7" y2="1418.3" stroke="#454545" stroke-width="2.3" />
</g>
<text x="2937.0" y="1422.4" font-size="26.2" fill="#333" text-anchor="start" font-weight="normal" >0.07</text>
<rect x="2839.2" y="1449.7" width="19.4" height="41.0" fill="#4a5bb8" />
<g clip-path="url(#pc)">
<line x1="2804.9" y1="1470.2" x2="2873.4" y2="1470.2" stroke="#454545" stroke-width="2.3" />
<line x1="2804.9" y1="1463.9" x2="2804.9" y2="1476.5" stroke="#454545" stroke-width="2.3" />
<line x1="2873.4" y1="1463.9" x2="2873.4" y2="1476.5" stroke="#454545" stroke-width="2.3" />
</g>
<text x="2821.7" y="1480.6" font-size="26.2" fill="#333" text-anchor="end" font-weight="normal" >-0.02</text>
<rect x="2845.8" y="1507.9" width="12.8" height="41.0" fill="#4a5bb8" />
<g clip-path="url(#pc)">
<line x1="2809.1" y1="1528.4" x2="2882.4" y2="1528.4" stroke="#454545" stroke-width="2.3" />
<line x1="2809.1" y1="1522.1" x2="2809.1" y2="1534.7" stroke="#454545" stroke-width="2.3" />
<line x1="2882.4" y1="1522.1" x2="2882.4" y2="1534.7" stroke="#454545" stroke-width="2.3" />
</g>
<text x="2828.3" y="1538.8" font-size="26.2" fill="#333" text-anchor="end" font-weight="normal" >-0.01</text>
<rect x="2847.8" y="1566.1" width="10.8" height="41.0" fill="#4a5bb8" />
<g clip-path="url(#pc)">
<line x1="2820.0" y1="1586.6" x2="2875.5" y2="1586.6" stroke="#454545" stroke-width="2.3" />
<line x1="2820.0" y1="1580.3" x2="2820.0" y2="1592.9" stroke="#454545" stroke-width="2.3" />
<line x1="2875.5" y1="1580.3" x2="2875.5" y2="1592.9" stroke="#454545" stroke-width="2.3" />
</g>
<text x="2830.2" y="1597.0" font-size="26.2" fill="#333" text-anchor="end" font-weight="normal" >-0.01</text>
<rect x="2858.6" y="1624.3" width="43.9" height="41.0" fill="#4a5bb8" />
<g clip-path="url(#pc)">
<line x1="2883.4" y1="1644.8" x2="2921.6" y2="1644.8" stroke="#454545" stroke-width="2.3" />
<line x1="2883.4" y1="1638.5" x2="2883.4" y2="1651.1" stroke="#454545" stroke-width="2.3" />
<line x1="2921.6" y1="1638.5" x2="2921.6" y2="1651.1" stroke="#454545" stroke-width="2.3" />
</g>
<text x="2919.5" y="1655.2" font-size="26.2" fill="#333" text-anchor="start" font-weight="normal" >0.05</text>
<rect x="2858.6" y="1682.5" width="36.9" height="41.0" fill="#4a5bb8" />
<g clip-path="url(#pc)">
<line x1="2876.4" y1="1703.0" x2="2914.6" y2="1703.0" stroke="#454545" stroke-width="2.3" />
<line x1="2876.4" y1="1696.7" x2="2876.4" y2="1709.3" stroke="#454545" stroke-width="2.3" />
<line x1="2914.6" y1="1696.7" x2="2914.6" y2="1709.3" stroke="#454545" stroke-width="2.3" />
</g>
<text x="2912.5" y="1713.4" font-size="26.2" fill="#333" text-anchor="start" font-weight="normal" >0.04</text>
<rect x="2858.6" y="1740.7" width="338.5" height="41.0" fill="#c47031" />
<g clip-path="url(#pc)">
<line x1="3034.8" y1="1761.2" x2="3359.4" y2="1761.2" stroke="#454545" stroke-width="2.3" />
<line x1="3034.8" y1="1754.9" x2="3034.8" y2="1767.5" stroke="#454545" stroke-width="2.3" />
<line x1="3359.4" y1="1754.9" x2="3359.4" y2="1767.5" stroke="#454545" stroke-width="2.3" />
</g>
<text x="3214.1" y="1771.6" font-size="26.2" fill="#333" text-anchor="start" font-weight="normal" >0.39</text>
<line x1="2858.6" y1="975.4" x2="2858.6" y2="1790.3" stroke="#cfcfcf" stroke-width="2.2" />
<text x="2392.4" y="1013.2" font-size="25.3" fill="#555" text-anchor="end" font-weight="normal" >1.   Disease severity</text>
<text x="2392.4" y="1069.0" font-size="25.3" fill="#555" text-anchor="end" font-weight="normal" >2. Size of population affected by disease</text>
<text x="2392.4" y="1125.0" font-size="25.3" fill="#555" text-anchor="end" font-weight="normal" >3. Unmet needs</text>
<text x="2392.4" y="1180.2" font-size="25.3" fill="#555" text-anchor="end" font-weight="normal" >4. Improvement of efficacy/effectiveness</text>
<text x="2385.2" y="1236.0" font-size="25.3" fill="#555" text-anchor="end" font-weight="normal" >5. Improvement of safety &amp; tolerability</text>
<text x="2385.2" y="1277.2" font-size="25.3" fill="#555" text-anchor="end" font-weight="normal" >6. Improvement of patient reported outcomes, convenience</text>
<text x="2392.4" y="1319.0" font-size="25.3" fill="#555" text-anchor="end" font-weight="normal" >&amp; adherence</text>
<text x="2392.4" y="1374.9" font-size="25.3" fill="#555" text-anchor="end" font-weight="normal" >7. Public health interest</text>
<text x="2392.4" y="1430.2" font-size="25.3" fill="#555" text-anchor="end" font-weight="normal" >8. Type of medical service</text>
<text x="2392.4" y="1486.1" font-size="25.3" fill="#555" text-anchor="end" font-weight="normal" >9. Fixed health costs</text>
<text x="2392.4" y="1541.3" font-size="25.3" fill="#555" text-anchor="end" font-weight="normal" >10. Direct health costs</text>
<text x="2392.4" y="1597.3" font-size="25.3" fill="#555" text-anchor="end" font-weight="normal" >11. Indirect costs</text>
<text x="2392.4" y="1652.8" font-size="25.3" fill="#555" text-anchor="end" font-weight="normal" >12. Completeness and consistency of reporting evidence</text>
<text x="2392.4" y="1708.0" font-size="25.3" fill="#555" text-anchor="end" font-weight="normal" >13. Current clinical guidelines</text>
</svg></body></html>
